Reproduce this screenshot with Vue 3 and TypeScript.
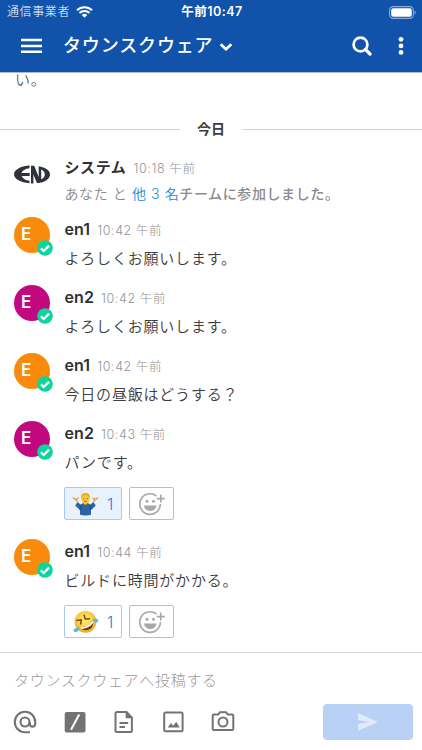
<script setup lang="ts">
interface Post {
  id: number
  user: string
  time: string
  text: string
  color: string
  reaction?: 'shrug' | 'rofl'
}

const posts: Post[] = [
  { id: 1, user: 'en1', time: '10:42', text: 'よろしくお願いします。', color: 'orange' },
  { id: 2, user: 'en2', time: '10:42', text: 'よろしくお願いします。', color: 'magenta' },
  { id: 3, user: 'en1', time: '10:42', text: '今日の昼飯はどうする？', color: 'orange' },
  { id: 4, user: 'en2', time: '10:43', text: 'パンです。', color: 'magenta', reaction: 'shrug' },
  { id: 5, user: 'en1', time: '10:44', text: 'ビルドに時間がかかる。', color: 'orange', reaction: 'rofl' },
]
</script>

<template>
  <div class="screen">
    <header class="header">
      <div class="status">
        <div class="carrier">
          <span>通信事業者</span>
          <svg class="wifi" width="17" height="12" viewBox="0 0 17 12" fill="none" stroke="#fff" stroke-width="2.2">
            <path d="M1 4.300a10.700 10.700 0 0 1 15 0M3.500 7a7.200 7.200 0 0 1 10 0" />
            <path d="M8.500 11.800 5.700 9a4 4 0 0 1 5.600 0z" fill="#fff" stroke="none" />
          </svg>
        </div>
        <div class="clock">午前10:47</div>
        <div class="power">
          <svg width="28" height="13" viewBox="0 0 28 13">
            <rect x=".6" y=".6" width="23.8" height="11.8" rx="3.6" fill="none" stroke="#8aa9da" stroke-width="1.1" />
            <rect x="2.2" y="2.2" width="20.6" height="8.6" rx="2" fill="#fff" />
            <path d="M25.700 4.300c1.500.8 1.500 3.600 0 4.400z" fill="#8aa9da" />
          </svg>
        </div>
      </div>
      <nav class="nav">
        <svg class="menu" width="21" height="16" viewBox="0 0 21 16" fill="#fff">
          <path d="M0 .8h21v2.500H0zM0 6.700h21v2.500H0zM0 12.600h21v2.500H0z" />
        </svg>
        <h1 class="title">タウンスクウェア</h1>
        <svg class="chevron" width="14" height="10" viewBox="0 0 14 10" fill="none" stroke="#fff" stroke-width="2.8">
          <path d="m1.700 2.200 5.300 5 5.300-5" />
        </svg>
        <svg class="search" width="20" height="20" viewBox="0 0 20 20" fill="none" stroke="#fff">
          <circle cx="8.500" cy="8.500" r="6.900" stroke-width="2.700" />
          <path d="m13.400 13.400 4.600 4.600" stroke-width="3.200" stroke-linecap="round" />
        </svg>
        <svg class="more" width="6" height="20" viewBox="0 0 6 20" fill="#fff">
          <circle cx="3" cy="3.300" r="2.400" /><circle cx="3" cy="9.900" r="2.400" /><circle cx="3" cy="16.400" r="2.400" />
        </svg>
      </nav>
    </header>

    <main class="list">
      <p class="cut">い。</p>
      <div class="separator"><i></i><span>今日</span><i></i></div>

      <article class="post system">
        <div class="logo">
          <svg width="36" height="19" viewBox="0 0 36 19" fill="#2f3238">
            <path d="M15.500.5C6.500 1.100 0 4.700 0 9.300s6.500 8.300 15.500 9v-2.600c-4-.4-7-2.200-7.800-4.700h8V7.900H7.600c.7-2.400 3.800-4.200 7.900-4.700z" />
            <path d="M17 18.400V.8h3.200l4.500 11.300V1.200C31.300 2.200 36 5.300 36 9.400s-4.700 7.600-11.300 8.600h-1.800l-3.500-8.500v8.900z" />
            <path d="M27.200 4.600c2.300 1 3.600 2.800 3.600 4.800s-1.300 3.800-3.600 4.800z" fill="#fff" />
          </svg>
        </div>
        <div class="body">
          <div class="meta"><b class="name">システム</b><time>10:18 午前</time></div>
          <p class="text">あなた と <a>他 3 名</a><b>チームに参加しました。</b></p>
        </div>
      </article>

      <article v-for="p in posts" :key="p.id" class="post" :class="{ reacted: p.reaction }">
        <div class="avatar" :class="p.color">
          <span>E</span>
          <svg class="badge" width="16" height="16" viewBox="0 0 16 16">
            <circle cx="8" cy="8" r="7.800" fill="#0fd39c" />
            <path d="m3.900 8.300 2.800 2.700 5.400-5.400" fill="none" stroke="#fff" stroke-width="2.300" />
          </svg>
        </div>
        <div class="body">
          <div class="meta"><b class="name">{{ p.user }}</b><time>{{ p.time }} 午前</time></div>
          <p class="text">{{ p.text }}</p>
          <div v-if="p.reaction" class="reactions">
            <div class="reaction" :class="p.reaction">
              <svg v-if="p.reaction === 'shrug'" width="27" height="24" viewBox="0 0 27 24">
                <path d="M8 22.800v-4.600l-4.800-4.700 2.400-3.600 3.200 2.800c1.300-1.400 2.800-2 4.700-2s3.400.6 4.700 2l3.200-2.800 2.400 3.600-4.800 4.700v4.600c-3 .8-8 .8-11 0z" fill="#2b64a3" />
                <path d="M8.800 12.700v5M18.200 12.700v5" stroke="#17467c" stroke-width=".8" />
                <path d="m4.800 9.900-1.500-1.700L.9 6.700C.1 5.900.7 5.100 1.700 5.400l2.500 1.100 1.400-1.100c1-.5 1.500.4.900 1.200L5.400 7.900l1 1.400zM22.200 9.900l1.500-1.700 2.400-1.500c.8-.8.200-1.600-.8-1.300l-2.500 1.100-1.400-1.100c-1-.5-1.500.4-.9 1.200l1.100 1.300-1 1.400z" fill="#f0a93a" />
                <path d="M11.700 10h3.600v2.300c-1 .9-2.600.9-3.600 0z" fill="#d79119" />
                <ellipse cx="13.500" cy="6.900" rx="4.200" ry="5" fill="#fcc73a" />
                <path d="M9.200 7C8.200 2.600 10.400.9 13.500.9S18.800 2.600 17.800 7c-.9-2.600-2.100-3.500-4.400-3.400-2.100 0-3.200 1.100-4.200 3.400z" fill="#eeb01a" />
                <path d="M11.200 6.700h1M14.800 6.700h1M12.400 9.400h2.200" stroke="#704819" stroke-width=".9" />
              </svg>
              <svg v-else width="27" height="24" viewBox="0 0 27 24">
                <defs>
                  <radialGradient id="face" cx=".48" cy=".4" r=".6">
                    <stop offset=".3" stop-color="#ffe25b" /><stop offset="1" stop-color="#f5a81c" />
                  </radialGradient>
                </defs>
                <circle cx="13.500" cy="11.800" r="10.900" fill="url(#face)" />
                <path d="m4.800 10.400 4.500-.6-.6 4.200M12.200 5.300l1 3.800 4.100-.3" fill="none" stroke="#69401c" stroke-width="1.400" stroke-linecap="round" />
                <path d="M8 17.200c5.900.2 10.100-2.300 12.700-6.700 1.500 4.700-1.100 8.700-5.300 9.600-3.100.6-6-.5-7.400-2.900z" fill="#68331b" />
                <path d="M8 17.200c5.700.1 9.900-2.300 12.700-6.700l.4 2.400c-2.700 3.600-6.700 5.800-11.800 6z" fill="#fff" />
                <path d="M1.900 19.400c1.300-1.400 3.200-2 5.700-2.100-.2 2.300-1.100 3.900-2.500 4.500-2.400.9-4.500-.9-3.200-2.400zM20.600 9.400c2-1 3.900-1.100 5-.2 1.300 1.300.4 3.200-1.400 3.400-1.500.1-2.800-1.100-3.600-3.200z" fill="#59b8e8" />
              </svg>
              <span>1</span>
            </div>
            <div class="add">
              <svg width="26" height="24" viewBox="0 0 26 24" fill="none" stroke="#a8a8ab" stroke-width="1.600">
                <path d="M17.500 4A10.300 10.300 0 1 0 21.400 12M21.800 2.600v8M17.800 6.600h8" />
                <circle cx="8" cy="9.300" r="1.500" fill="#a8a8ab" stroke="none" />
                <circle cx="14.500" cy="9.300" r="1.500" fill="#a8a8ab" stroke="none" />
                <path d="M4.900 13.500h12.700c-.6 3.600-3.200 5.500-6.400 5.500s-5.700-1.900-6.300-5.500z" fill="#a8a8ab" stroke="none" />
              </svg>
            </div>
          </div>
        </div>
      </article>
    </main>

    <footer class="composer">
      <div class="placeholder">タウンスクウェアへ投稿する</div>
      <div class="tools">
        <svg width="24" height="24" viewBox="0 0 24 24" fill="none" stroke="#737375" stroke-width="2.100">
          <circle cx="12" cy="12" r="4.500" />
          <path d="M17 22.200h-5A10.200 10.200 0 1 1 22.200 12v1.700c0 3.900-5.400 3.900-5.400 0V12" />
        </svg>
        <svg width="24" height="24" viewBox="0 0 24 24">
          <rect x="1.700" y="1.900" width="20.800" height="20.600" rx="2" fill="#737375" />
          <path d="M16.200 4.500 8 19.700" stroke="#fff" stroke-width="2" />
        </svg>
        <svg width="24" height="24" viewBox="0 0 24 24" fill="none" stroke="#737375" stroke-width="2">
          <path d="M14.500 2H5a1.500 1.500 0 0 0-1.500 1.500v17A1.500 1.500 0 0 0 5 22h13.400a1.500 1.500 0 0 0 1.500-1.500V7.700z" />
          <path d="M13.700 2v6.200h6.200z" fill="#737375" stroke="none" />
          <path d="M7.500 13h8.700M7.500 17h5.500" />
        </svg>
        <svg width="24" height="24" viewBox="0 0 24 24" fill="none" stroke="#737375" stroke-width="2">
          <rect x="2.200" y="2.500" width="18.400" height="18.800" rx="1.500" />
          <path d="m5.700 17.500 3.200-4.400 2.400 2.700 2.900-4 3.500 5.700z" fill="#737375" stroke="none" />
        </svg>
        <svg width="24" height="24" viewBox="0 0 24 24" fill="none" stroke="#737375" stroke-width="2">
          <path d="M2.900 4.400h4.300L9 2.200h6l1.800 2.200h4.300c.7 0 1.200.5 1.200 1.200v13.200c0 .7-.5 1.200-1.200 1.200H2.900c-.7 0-1.200-.5-1.200-1.200V5.600c0-.7.500-1.200 1.200-1.200z" />
          <circle cx="12" cy="12" r="4.500" />
        </svg>
        <button class="send" type="button">
          <svg width="20" height="18" viewBox="0 0 20 18" fill="#dfeafa"><path d="M0 0 20 8.900 0 17.800v-6.900l11.500-2L0 6.900z" /></svg>
        </button>
      </div>
    </footer>
  </div>
</template>

<style>
body {
  background: #fff;
  overflow: hidden;
}
</style>

<style scoped>
* {
  box-sizing: border-box;
}
.screen {
  width: 422px;
  height: 750px;
  display: flex;
  flex-direction: column;
  overflow: hidden;
  background: #fff;
  color: #3d3c40;
  font-family: Inter, 'Noto Sans CJK JP', sans-serif;
}
p,
h1 {
  margin: 0;
}
svg {
  display: block;
  flex: none;
}
.header {
  height: 73px;
  flex: none;
  background: #1153ab;
  border-bottom: 1px solid #a9bbdc;
  color: #fff;
}
.status {
  height: 23px;
  display: grid;
  grid-template-columns: 1fr auto 1fr;
  align-items: center;
  padding: 1px 5px 0 7px;
  font-size: 12px;
  line-height: 22px;
}
.carrier {
  display: flex;
  align-items: center;
  gap: 6px;
  font-weight: 300;
  letter-spacing: 0.6px;
}
.clock {
  font-size: 12.500px;
  font-weight: 600;
  letter-spacing: 0.5px;
}
.power {
  justify-self: end;
}
.nav {
  height: 46px;
  display: flex;
  align-items: center;
  padding: 0 18px 0 21px;
}
.title {
  margin-left: 21px;
  font-size: 18px;
  line-height: 26px;
  font-weight: 500;
  letter-spacing: 0.850px;
}
.chevron {
  margin: 2px 0 0 6px;
}
.search {
  margin-left: auto;
}
.more {
  margin-left: 26px;
}
.list {
  flex: 1;
  overflow: hidden;
}
.cut {
  height: 46px;
  margin-top: -4px;
  padding-left: 15px;
  font-size: 15px;
  line-height: 22px;
  letter-spacing: 0.7px;
  font-weight: 350;
  color: #65656a;
}
.separator {
  height: 28px;
  display: flex;
  align-items: center;
  gap: 17px;
  font-size: 14px;
  font-weight: 600;
}
.separator i {
  flex: 1;
  height: 1px;
  background: #d2d3da;
}
.separator span {
  line-height: 20px;
  padding-bottom: 1px;
}
.post {
  height: 68px;
  display: flex;
  gap: 14.500px;
  padding-left: 14px;
}
.system {
  height: 63px;
  margin-top: 11px;
}
.reacted {
  height: 118px;
}
.logo {
  width: 36px;
  padding-top: 11px;
}
.avatar {
  position: relative;
  width: 36px;
  height: 36px;
  flex: none;
  border-radius: 50%;
  color: #fff;
  font-size: 17px;
  line-height: 35px;
  font-weight: 600;
  padding-left: 7px;
}
.orange {
  background: #fa8a0b;
}
.magenta {
  background: #c2087e;
}
.badge {
  position: absolute;
  left: 23.300px;
  top: 23.300px;
}
.body {
  flex: 1;
}
.meta {
  height: 26px;
  display: flex;
  align-items: baseline;
  line-height: 25px;
}
.name {
  font-size: 16px;
  font-weight: 600;
  letter-spacing: 0.1px;
  color: #2f3036;
}
.system .name {
  font-size: 15px;
  font-weight: 600;
  line-height: 27px;
  letter-spacing: 0.6px;
}
time {
  margin-left: 7px;
  font-size: 12.500px;
  font-weight: 300;
  letter-spacing: 0.6px;
  color: #929297;
}
.system time {
  line-height: 30px;
}
.text {
  margin-top: 5px;
  font-size: 15px;
  line-height: 22px;
  font-weight: 350;
  letter-spacing: 0.8px;
  white-space: nowrap;
  color: #3d3c40;
}
.system .text {
  margin-top: 3px;
  font-size: 14px;
  letter-spacing: 0.6px;
  color: #8b8a8d;
}
.system .text b {
  font-weight: 500;
}
.text a {
  color: #2389d7;
}
.reactions {
  display: flex;
  gap: 7px;
  margin: 13px 0 0 -0.5px;
}
.reaction,
.add {
  height: 33px;
  display: flex;
  align-items: center;
  border: 1px solid #a5cbee;
  border-radius: 2px;
}
.reaction {
  width: 58px;
  padding-left: 7px;
  gap: 8px;
  color: #2a82cb;
  font-size: 16px;
  font-weight: 350;
}
.shrug {
  background: #e8f2fc;
}
.add {
  width: 45px;
  justify-content: center;
  border-color: #bebec0;
}
.composer {
  height: 98px;
  flex: none;
  border-top: 1px solid #d3d3d4;
}
.placeholder {
  height: 50px;
  padding: 3px 0 0 14px;
  font-size: 15px;
  line-height: 50px;
  font-weight: 300;
  letter-spacing: 0.7px;
  color: #98989b;
}
.tools {
  display: flex;
  align-items: center;
  gap: 25.500px;
  padding: 0 9px 0 13px;
}
.send {
  width: 90px;
  height: 36px;
  margin: 1px 0 0 auto;
  padding: 0;
  display: flex;
  align-items: center;
  justify-content: center;
  border: 0;
  border-radius: 4px;
  background: #b8d1f4;
}
</style>
